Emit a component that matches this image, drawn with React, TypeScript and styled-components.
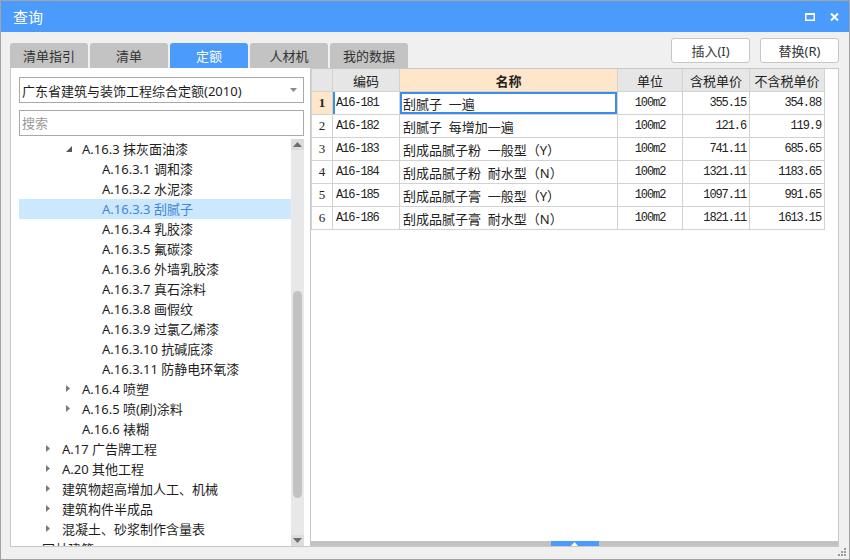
import styled, { createGlobalStyle } from 'styled-components';

const GlobalStyle = createGlobalStyle`
  html, body {
    margin: 0;
    padding: 0;
    background: #ffffff;
  }
  body {
    font-family: "Noto Sans", "Noto Sans CJK SC", sans-serif;
  }
  * {
    box-sizing: border-box;
  }
`;

const UI_FONT = `"Noto Sans", "Noto Sans CJK SC", sans-serif`;
const MONO_FONT = `"Liberation Mono", "Noto Sans CJK SC", monospace`;

const Window = styled.div`
  position: relative;
  width: 850px;
  height: 560px;
  border: 1px solid #a3a3a3;
  background: #f0f0f0;
  display: flex;
  flex-direction: column;
  overflow: hidden;
  font-family: ${UI_FONT};
`;

const TitleBar = styled.div`
  height: 31px;
  flex: none;
  background: #4a9bfb;
  color: #ffffff;
  display: flex;
  align-items: center;
  padding: 0 10px 0 12px;
  font-size: 15px;
`;

const Title = styled.div`
  flex: 1;
`;

const TitleIcons = styled.div`
  display: flex;
  align-items: center;
  gap: 15px;
`;

const Content = styled.div`
  flex: 1;
  display: flex;
  flex-direction: column;
  padding: 0 10px 0 9px;
`;

const Toolbar = styled.div`
  height: 36px;
  flex: none;
  display: flex;
  align-items: flex-end;
  justify-content: space-between;
`;

const Tabs = styled.div`
  display: flex;
  gap: 2px;
`;

const Tab = styled.div<{ $active?: boolean }>`
  width: 78px;
  height: 25px;
  display: flex;
  align-items: center;
  justify-content: center;
  font-size: 13px;
  border-radius: 3px 3px 0 0;
  background: ${p => (p.$active ? '#4a9bfb' : '#c3c3c3')};
  color: ${p => (p.$active ? '#ffffff' : '#333333')};
`;

const Buttons = styled.div`
  display: flex;
  gap: 10px;
  margin-bottom: 5px;
`;

const Button = styled.div`
  width: 79px;
  height: 25px;
  display: flex;
  align-items: center;
  justify-content: center;
  background: #ffffff;
  border: 1px solid #c6c6c6;
  border-radius: 3px;
  font-size: 13px;
  color: #333333;
`;

const Main = styled.div`
  height: 479px;
  flex: none;
  display: flex;
`;

const LeftPanel = styled.div`
  width: 301px;
  flex: none;
  background: #ffffff;
  border: 1px solid #c8c8c8;
  border-top: none;
  padding: 9px 6px 0 8px;
  display: flex;
  flex-direction: column;
`;

const Select = styled.div`
  height: 26px;
  border: 1px solid #a9a9a9;
  display: flex;
  align-items: center;
  padding: 0 6px 0 2px;
  font-size: 13px;
  color: #1e1e1e;
`;

const SelectText = styled.div`
  flex: 1;
`;

const Search = styled.input`
  margin-top: 7px;
  height: 26px;
  border: 1px solid #a9a9a9;
  padding: 0 2px;
  font-family: ${UI_FONT};
  font-size: 13px;
  outline: none;
  &::placeholder {
    color: #9a9a9a;
  }
`;

const TreeArea = styled.div`
  margin-top: 3px;
  flex: 1;
  display: flex;
  min-height: 0;
`;

const TreeList = styled.div`
  flex: 1;
  overflow: hidden;
  padding-bottom: 0;
`;

const TreeRow = styled.div<{ $level: number; $selected?: boolean }>`
  height: 20px;
  display: flex;
  align-items: center;
  padding-left: ${p => 3 + 20 * (p.$level - 1)}px;
  padding-bottom: 2px;
  font-size: 13px;
  white-space: nowrap;
  background: ${p => (p.$selected ? '#cce8ff' : 'transparent')};
  color: ${p => (p.$selected ? '#3f86d6' : '#1e1e1e')};
`;

const Toggle = styled.div`
  width: 20px;
  height: 18px;
  flex: none;
  display: flex;
  align-items: center;
  padding-left: 4px;
  padding-top: 1px;
`;

const ScrollBar = styled.div`
  width: 13px;
  flex: none;
  background: #e8e8e8;
  display: flex;
  flex-direction: column;
`;

const ScrollButton = styled.div`
  height: 11px;
  flex: none;
  display: flex;
  align-items: center;
  justify-content: center;
  background: #dcdcdc;
`;

const ScrollTrack = styled.div`
  flex: 1;
  padding: 141px 2px 0 2px;
`;

const ScrollThumb = styled.div`
  height: 207px;
  border-radius: 5px;
  background: #c2c2c2;
`;

const RightPanel = styled.div`
  flex: 1;
  background: #ffffff;
  border: 1px solid #c8c8c8;
  border-left: none;
  display: flex;
  flex-direction: column;
`;

const Grid = styled.div`
  display: grid;
  grid-template-columns: 22px 67px 218px 65px 67px 75px;
  grid-auto-rows: 23px;
  width: 514px;
`;

const Cell = styled.div<{
  $head?: boolean;
  $peach?: boolean;
  $align?: 'left' | 'center' | 'right';
  $mono?: boolean;
  $first?: boolean;
  $focus?: boolean;
  $mark?: boolean;
  $bold?: boolean;
  $serif?: boolean;
}>`
  display: flex;
  align-items: center;
  justify-content: ${p =>
    p.$align === 'right' ? 'flex-end' : p.$align === 'center' ? 'center' : 'flex-start'};
  padding: 0 3px 0 3px;
  border-right: 1px solid #d2d2d2;
  border-bottom: 1px solid #d2d2d2;
  border-left: ${p => (p.$first ? '1px solid #d2d2d2' : 'none')};
  background: ${p => (p.$peach ? '#fde6c9' : p.$head ? '#e6e6e6' : '#ffffff')};
  font-family: ${p =>
    p.$mono ? MONO_FONT : p.$serif ? `"Liberation Serif", serif` : UI_FONT};
  font-size: ${p => (p.$mono ? '12px' : '13px')};
  letter-spacing: ${p => (p.$mono ? '-1.1px' : '0')};
  font-weight: ${p => (p.$bold ? 700 : 400)};
  color: #222222;
  white-space: nowrap;
  box-shadow: ${p =>
    p.$focus ? 'inset 0 0 0 2px #3b8de8' : p.$mark ? 'inset 2px 0 0 #3b8de8' : 'none'};
`;

const Filler = styled.div`
  flex: 1;
`;

const Splitter = styled.div`
  height: 5px;
  flex: none;
  background: #c2c2c2;
  display: flex;
  justify-content: center;
`;

const SplitHandle = styled.div`
  width: 48px;
  background: #4a9bfb;
  display: flex;
  align-items: center;
  justify-content: center;
`;

const Footer = styled.div`
  flex: 1;
`;

const Grip = styled.svg`
  position: absolute;
  right: 2px;
  bottom: 2px;
`;

type TreeItem = {
  label: string;
  level: number;
  state?: 'open' | 'closed';
  selected?: boolean;
};

const tree: TreeItem[] = [
  { label: 'A.16.3 抹灰面油漆', level: 3, state: 'open' },
  { label: 'A.16.3.1 调和漆', level: 4 },
  { label: 'A.16.3.2 水泥漆', level: 4 },
  { label: 'A.16.3.3 刮腻子', level: 4, selected: true },
  { label: 'A.16.3.4 乳胶漆', level: 4 },
  { label: 'A.16.3.5 氟碳漆', level: 4 },
  { label: 'A.16.3.6 外墙乳胶漆', level: 4 },
  { label: 'A.16.3.7 真石涂料', level: 4 },
  { label: 'A.16.3.8 画假纹', level: 4 },
  { label: 'A.16.3.9 过氯乙烯漆', level: 4 },
  { label: 'A.16.3.10 抗碱底漆', level: 4 },
  { label: 'A.16.3.11 防静电环氧漆', level: 4 },
  { label: 'A.16.4 喷塑', level: 3, state: 'closed' },
  { label: 'A.16.5 喷(刷)涂料', level: 3, state: 'closed' },
  { label: 'A.16.6 裱糊', level: 3 },
  { label: 'A.17 广告牌工程', level: 2, state: 'closed' },
  { label: 'A.20 其他工程', level: 2, state: 'closed' },
  { label: '建筑物超高增加人工、机械', level: 2, state: 'closed' },
  { label: '建筑构件半成品', level: 2, state: 'closed' },
  { label: '混凝土、砂浆制作含量表', level: 2, state: 'closed' },
  { label: '园林建筑', level: 1 },
];

const rows = [
  ['A16-181', '刮腻子\u00a0 一遍', '355.15', '354.88'],
  ['A16-182', '刮腻子\u00a0 每增加一遍', '121.6', '119.9'],
  ['A16-183', '刮成品腻子粉\u00a0 一般型（Y）', '741.11', '685.65'],
  ['A16-184', '刮成品腻子粉\u00a0 耐水型（N）', '1321.11', '1183.65'],
  ['A16-185', '刮成品腻子膏\u00a0 一般型（Y）', '1097.11', '991.65'],
  ['A16-186', '刮成品腻子膏\u00a0 耐水型（N）', '1821.11', '1613.15'],
];

function Arrow({ state }: { state?: 'open' | 'closed' }) {
  if (state === 'open') {
    return (
      <svg width="6" height="6" viewBox="0 0 6 6">
        <path d="M6 0 L6 6 L0 6 Z" fill="#595959" />
      </svg>
    );
  }
  if (state === 'closed') {
    return (
      <svg width="4" height="7" viewBox="0 0 4 7">
        <path d="M0 0 L4 3.5 L0 7 Z" fill="#7a7a7a" />
      </svg>
    );
  }
  return null;
}

export default function App() {
  return (
    <>
      <GlobalStyle />
      <Window>
        <TitleBar>
          <Title>查询</Title>
          <TitleIcons>
            <svg width="10" height="8" viewBox="0 0 10 8">
              <rect x="0.75" y="1" width="8.5" height="6.25" fill="none" stroke="#fff" strokeWidth="1.5" />
              <rect x="0" y="0" width="10" height="2" fill="#fff" />
            </svg>
            <svg width="9" height="8" viewBox="0 0 9 8">
              <path d="M1 0.5 L8 7.5 M8 0.5 L1 7.5" stroke="#fff" strokeWidth="2" />
            </svg>
          </TitleIcons>
        </TitleBar>
        <Content>
          <Toolbar>
            <Tabs>
              <Tab>清单指引</Tab>
              <Tab>清单</Tab>
              <Tab $active>定额</Tab>
              <Tab>人材机</Tab>
              <Tab>我的数据</Tab>
            </Tabs>
            <Buttons>
              <Button>插入(I)</Button>
              <Button>替换(R)</Button>
            </Buttons>
          </Toolbar>
          <Main>
            <LeftPanel>
              <Select>
                <SelectText>广东省建筑与装饰工程综合定额(2010)</SelectText>
                <svg width="7" height="4" viewBox="0 0 7 4">
                  <path d="M0 0 L7 0 L3.5 4 Z" fill="#8a8a8a" />
                </svg>
              </Select>
              <Search placeholder="搜索" />
              <TreeArea>
                <TreeList>
                  {tree.map(item => (
                    <TreeRow key={item.label} $level={item.level} $selected={item.selected}>
                      <Toggle>
                        <Arrow state={item.state} />
                      </Toggle>
                      {item.label}
                    </TreeRow>
                  ))}
                </TreeList>
                <ScrollBar>
                  <ScrollButton>
                    <svg width="9" height="5" viewBox="0 0 9 5">
                      <path d="M0 5 L4.5 0 L9 5 Z" fill="#6e6e6e" />
                    </svg>
                  </ScrollButton>
                  <ScrollTrack>
                    <ScrollThumb />
                  </ScrollTrack>
                  <ScrollButton>
                    <svg width="9" height="5" viewBox="0 0 9 5">
                      <path d="M0 0 L9 0 L4.5 5 Z" fill="#6e6e6e" />
                    </svg>
                  </ScrollButton>
                </ScrollBar>
              </TreeArea>
            </LeftPanel>
            <RightPanel>
              <Grid>
                <Cell $head $first />
                <Cell $head $align="center">编码</Cell>
                <Cell $peach $align="center" $bold>名称</Cell>
                <Cell $head $align="center">单位</Cell>
                <Cell $head $align="center">含税单价</Cell>
                <Cell $head $align="center">不含税单价</Cell>
                {rows.map((r, i) => {
                  const sel = i === 0;
                  return [
                    <Cell key={`n${i}`} $first $align="center" $serif $peach={sel} $bold={sel}>
                      {i + 1}
                    </Cell>,
                    <Cell key={`c${i}`} $mono $mark={sel}>{r[0]}</Cell>,
                    <Cell key={`m${i}`} $focus={sel}>{r[1]}</Cell>,
                    <Cell key={`u${i}`} $mono $align="center">100m2</Cell>,
                    <Cell key={`p${i}`} $mono $align="right">{r[2]}</Cell>,
                    <Cell key={`q${i}`} $mono $align="right">{r[3]}</Cell>,
                  ];
                })}
              </Grid>
              <Filler />
              <Splitter>
                <SplitHandle>
                  <svg width="7" height="4" viewBox="0 0 7 4">
                    <path d="M0 4 L3.5 0 L7 4 Z" fill="#ffffff" />
                  </svg>
                </SplitHandle>
              </Splitter>
            </RightPanel>
          </Main>
          <Footer />
        </Content>
        <Grip width="9" height="9" viewBox="0 0 9 9">
          <rect x="6" y="0" width="2" height="2" fill="#9a9a9a" />
          <rect x="3" y="3" width="2" height="2" fill="#9a9a9a" />
          <rect x="6" y="3" width="2" height="2" fill="#9a9a9a" />
          <rect x="0" y="6" width="2" height="2" fill="#9a9a9a" />
          <rect x="3" y="6" width="2" height="2" fill="#9a9a9a" />
          <rect x="6" y="6" width="2" height="2" fill="#9a9a9a" />
        </Grip>
      </Window>
    </>
  );
}
